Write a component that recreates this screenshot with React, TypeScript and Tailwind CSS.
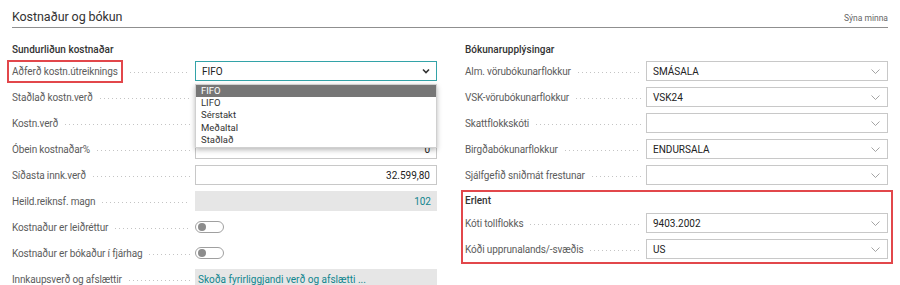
import { ReactNode } from "react";

const FONT = "font-['Roboto','Open_Sans',sans-serif]";

function Leader() {
  return (
    <div className="flex-1 ml-[7px] mr-[5px] mt-[2px] h-px bg-[linear-gradient(to_right,#c4c4c4_1px,transparent_1px)] bg-[length:4px_1px] bg-repeat-x" />
  );
}

function Chevron() {
  return (
    <svg width="9" height="5" viewBox="0 0 9 5" className="shrink-0">
      <path d="M0.5 0.5 L4.5 4.5 L8.5 0.5" fill="none" stroke="#8d8d8d" strokeWidth="0.8" />
    </svg>
  );
}

function Row({ label, children, highlight }: { label: string; children: ReactNode; highlight?: boolean }) {
  return (
    <div className="flex items-center h-[26px]">
      {highlight ? (
        <span className="h-[23px] -ml-[5px] px-[3px] border-2 border-[#e2474b] flex items-center text-[10px] tracking-[-0.15px] text-[#5c5c5c] whitespace-nowrap">
          {label}
        </span>
      ) : (
        <span className="text-[10px] tracking-[-0.15px] text-[#5c5c5c] whitespace-nowrap">{label}</span>
      )}
      <Leader />
      <div className="w-[242px] shrink-0 relative">{children}</div>
    </div>
  );
}

function Select({ value }: { value: string }) {
  return (
    <div className="h-[20px] border border-[#c8c8c8] bg-white flex items-center justify-between pl-[6px] pr-[7px]">
      <span className="text-[10px] text-[#222]">{value}</span>
      <Chevron />
    </div>
  );
}

function Input({ value }: { value: string }) {
  return (
    <div className="h-[20px] border border-[#c8c8c8] bg-white flex items-center justify-end px-[6px]">
      <span className="text-[10px] text-[#222]">{value}</span>
    </div>
  );
}

function Toggle() {
  return (
    <div className="w-[29px] h-[12px] rounded-full border border-[#a0a0a0] bg-white flex items-center pl-[2px]">
      <div className="w-[8px] h-[8px] rounded-full bg-[#8c8c8c]" />
    </div>
  );
}

const options = ["FIFO", "LIFO", "Sérstakt", "Meðaltal", "Staðlað"];

export default function App() {
  return (
    <div className={`w-[900px] h-[285px] overflow-hidden bg-white px-[12px] ${FONT}`}>
      <div className="flex justify-between items-end pt-[9px] pb-[2px] border-b border-[#8f8f8f]">
        <span className="text-[12.5px] leading-[16px] tracking-[-0.1px] text-[#333]">Kostnaður og bókun</span>
        <span className="text-[8.5px] leading-[12px] text-[#666] mb-[1px]">Sýna minna</span>
      </div>

      <div className="grid grid-cols-[425px_423px] gap-x-[28px] mt-[14px]">
        <div>
          <div className="h-[16px] leading-[16px] text-[10px] font-medium text-[#333]">Sundurliðun kostnaðar</div>
          <Row label="Aðferð kostn.útreiknings" highlight>
            <div className="h-[20px] border border-[#33a3a8] bg-white flex items-center justify-between pl-[6px] pr-[6px]">
              <span className="text-[10px] text-[#222]">FIFO</span>
              <svg width="8" height="6" viewBox="0 0 8 6">
                <path d="M1 1.5 L4 4.5 L7 1.5" fill="none" stroke="#333" strokeWidth="1.6" />
              </svg>
            </div>
            <div className="absolute left-0 top-[23px] w-full bg-white border border-[#d0d0d0] shadow-[0_2px_5px_rgba(0,0,0,0.28)] z-10">
              {options.map((o, i) => (
                <div
                  key={o}
                  className={
                    i === 0
                      ? "h-[12px] leading-[12px] px-[5px] text-[9.5px] bg-[#767676] text-white"
                      : "h-[12.4px] leading-[12.4px] px-[5px] text-[9.5px] text-[#333]"
                  }
                >
                  {o}
                </div>
              ))}
            </div>
          </Row>
          <Row label="Staðlað kostn.verð">
            <Input value="0" />
          </Row>
          <Row label="Kostn.verð">
            <Input value="0" />
          </Row>
          <Row label="Óbein kostnaðar%">
            <Input value="0" />
          </Row>
          <Row label="Síðasta innk.verð">
            <Input value="32.599,80" />
          </Row>
          <Row label="Heild.reiknsf. magn">
            <div className="h-[20px] bg-[#e6e6e6] flex items-center justify-end px-[6px]">
              <span className="text-[10px] text-[#0f858e]">102</span>
            </div>
          </Row>
          <Row label="Kostnaður er leiðréttur">
            <Toggle />
          </Row>
          <Row label="Kostnaður er bókaður í fjárhag">
            <Toggle />
          </Row>
          <Row label="Innkaupsverð og afslættir">
            <div className="h-[20px] bg-[#e6e6e6] flex items-center px-[3px]">
              <span className="text-[10px] text-[#0f858e]">Skoða fyrirliggjandi verð og afslætti ...</span>
            </div>
          </Row>
        </div>

        <div>
          <div className="h-[16px] leading-[16px] text-[10px] font-medium text-[#333]">Bókunarupplýsingar</div>
          <Row label="Alm. vörubókunarflokkur">
            <Select value="SMÁSALA" />
          </Row>
          <Row label="VSK-vörubókunarflokkur">
            <Select value="VSK24" />
          </Row>
          <Row label="Skattflokkskóti">
            <Select value="" />
          </Row>
          <Row label="Birgðabókunarflokkur">
            <Select value="ENDURSALA" />
          </Row>
          <Row label="Sjálfgefið sniðmát frestunar">
            <Select value="" />
          </Row>
          <div className="mt-[2px] -ml-[4px] -mr-[5px] pl-[2px] pr-[3px] border-2 border-[#e2474b]">
            <div className="h-[18px] leading-[18px] text-[10px] font-medium text-[#333]">Erlent</div>
            <Row label="Kóti tollflokks">
              <Select value="9403.2002" />
            </Row>
            <Row label="Kóði upprunalands/-svæðis">
              <Select value="US" />
            </Row>
          </div>
        </div>
      </div>
    </div>
  );
}
